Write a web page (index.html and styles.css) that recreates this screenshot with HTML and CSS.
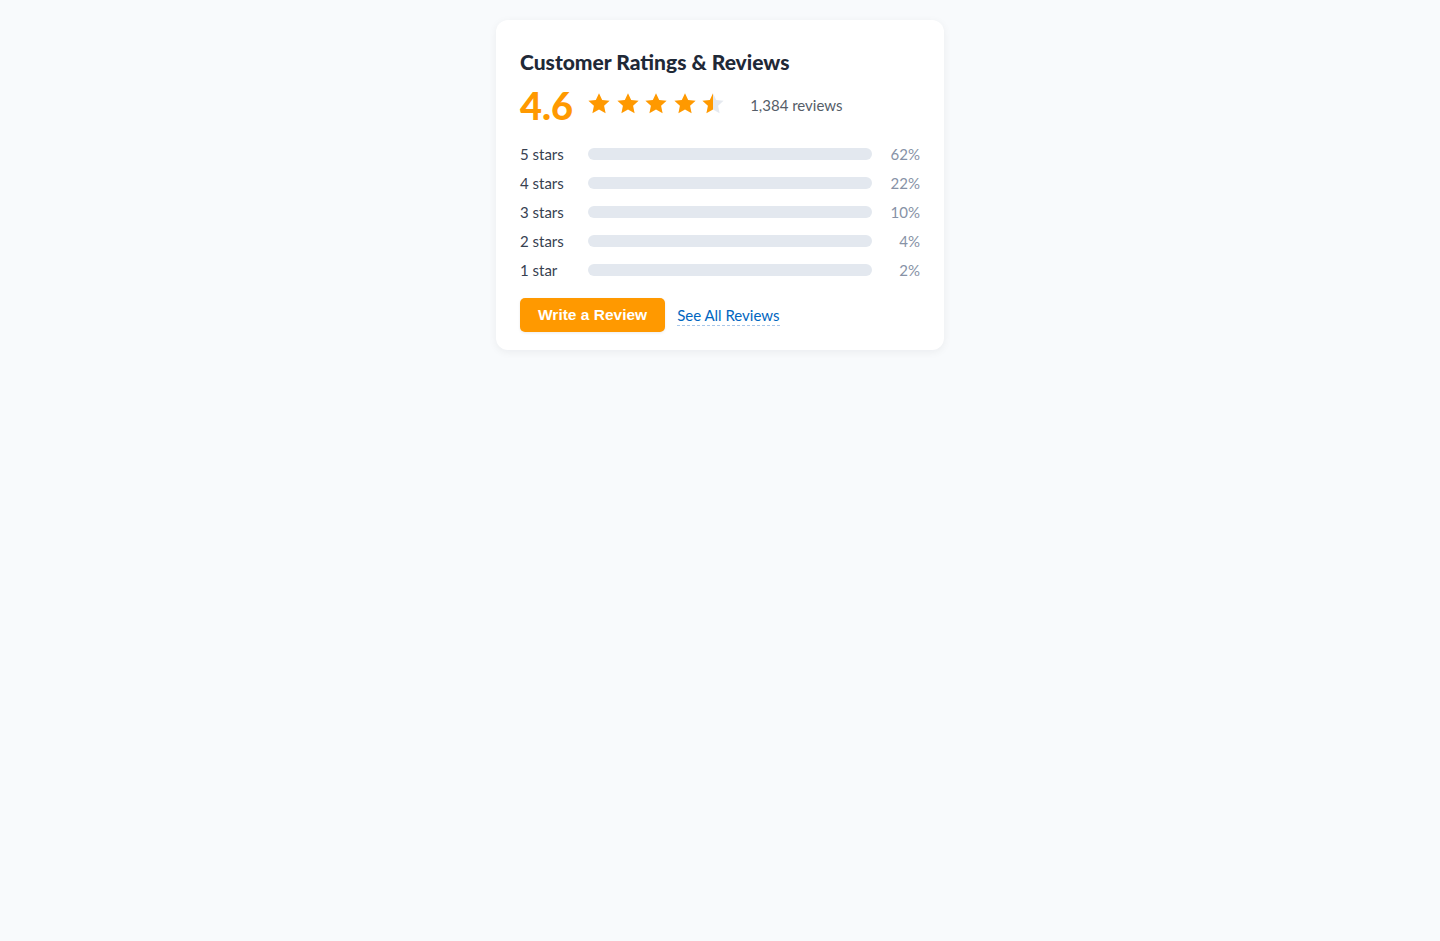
FILE: index.html
```html
<!DOCTYPE html>
<html lang="en">
<head>
<meta charset="utf-8">
<title>Customer Ratings & Reviews</title>
<link rel="stylesheet" href="styles.css">
</head>
<body>
<section class="card">
  <h2 class="title">Customer Ratings &amp; Reviews</h2>
  <div class="summary">
    <span class="score">4.6</span>
    <span class="stars">
      <svg class="star" viewBox="0 0 24 24"><path d="M12 2l2.94 6.26 6.86.78-5.1 4.66 1.4 6.76L12 17.02 5.9 20.46l1.4-6.76-5.1-4.66 6.86-.78z" fill="#ff9900"/></svg>
      <svg class="star" viewBox="0 0 24 24"><path d="M12 2l2.94 6.26 6.86.78-5.1 4.66 1.4 6.76L12 17.02 5.9 20.46l1.4-6.76-5.1-4.66 6.86-.78z" fill="#ff9900"/></svg>
      <svg class="star" viewBox="0 0 24 24"><path d="M12 2l2.94 6.26 6.86.78-5.1 4.66 1.4 6.76L12 17.02 5.9 20.46l1.4-6.76-5.1-4.66 6.86-.78z" fill="#ff9900"/></svg>
      <svg class="star" viewBox="0 0 24 24"><path d="M12 2l2.94 6.26 6.86.78-5.1 4.66 1.4 6.76L12 17.02 5.9 20.46l1.4-6.76-5.1-4.66 6.86-.78z" fill="#ff9900"/></svg>
      <svg class="star" viewBox="0 0 24 24"><defs><linearGradient id="half"><stop offset="50%" stop-color="#ff9900"/><stop offset="50%" stop-color="#e5e9ef"/></linearGradient></defs><path d="M12 2l2.94 6.26 6.86.78-5.1 4.66 1.4 6.76L12 17.02 5.9 20.46l1.4-6.76-5.1-4.66 6.86-.78z" fill="url(#half)"/></svg>
    </span>
    <span class="count">1,384 reviews</span>
  </div>
  <div class="rows">
    <div class="row"><span class="label">5 stars</span><span class="bar"></span><span class="pct">62%</span></div>
    <div class="row"><span class="label">4 stars</span><span class="bar"></span><span class="pct">22%</span></div>
    <div class="row"><span class="label">3 stars</span><span class="bar"></span><span class="pct">10%</span></div>
    <div class="row"><span class="label">2 stars</span><span class="bar"></span><span class="pct">4%</span></div>
    <div class="row"><span class="label">1 star</span><span class="bar"></span><span class="pct">2%</span></div>
  </div>
  <div class="actions">
    <button class="btn">Write a Review</button>
    <a class="link" href="#">See All Reviews</a>
  </div>
</section>
</body>
</html>
```

FILE: styles.css
```css
html, body {
  margin: 0;
  padding: 0;
}
body {
  background: #f8fafc;
  font-family: "Segoe UI", Lato, "Open Sans", sans-serif;
  color: #1f2937;
  display: flex;
  justify-content: center;
  padding-top: 20px;
  min-height: 941px;
  box-sizing: border-box;
}
.card {
  width: 448px;
  box-sizing: border-box;
  background: #ffffff;
  border-radius: 12px;
  box-shadow: 0 2px 8px rgba(15, 23, 42, 0.06);
  padding: 28px 24px 18px;
  align-self: flex-start;
}
.title {
  margin: 0;
  font-size: 21px;
  font-weight: 900;
  color: #1f2937;
  line-height: 28px;
}
.summary {
  display: flex;
  align-items: center;
  margin-top: 5px;
  height: 48px;
}
.score {
  font-size: 38px;
  font-weight: 900;
  color: #ff9900;
  line-height: 1;
}
.stars {
  display: flex;
  gap: 2.5px;
  margin-left: 13px;
  margin-top: -2px;
}
.star {
  width: 26px;
  height: 26px;
  display: block;
}
.count {
  margin-left: 24px;
  font-size: 15px;
  color: #555d68;
}
.rows {
  margin-top: 15px;
  display: flex;
  flex-direction: column;
  gap: 9px;
}
.row {
  display: flex;
  align-items: center;
  height: 20px;
}
.label {
  width: 68px;
  font-size: 15px;
  color: #374151;
}
.bar {
  width: 284px;
  height: 12px;
  border-radius: 6px;
  background: #e3e8ef;
}
.pct {
  flex: 1;
  text-align: right;
  font-size: 15px;
  color: #8792a6;
}
.actions {
  display: flex;
  align-items: center;
  gap: 12px;
  margin-top: 18px;
}
.btn {
  background: #ff9900;
  color: #ffffff;
  border: none;
  border-radius: 5px;
  height: 34px;
  padding: 0 18px;
  font-family: "Liberation Sans", Arial, sans-serif;
  font-weight: 700;
  font-size: 15.5px;
  box-shadow: 0 1px 3px rgba(0, 0, 0, 0.08);
  cursor: pointer;
}
.link {
  color: #0066c0;
  font-size: 15px;
  text-decoration: none;
  border-bottom: 1px dashed #a9c8ea;
  line-height: 20px;
}
```
